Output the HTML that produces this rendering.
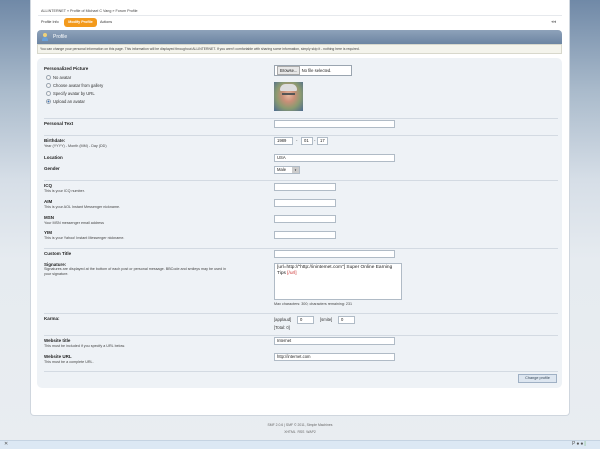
<!DOCTYPE html>
<html><head><meta charset="utf-8"><style>
*{margin:0;padding:0;box-sizing:border-box}
body{width:600px;height:449px;overflow:hidden;position:relative;font-family:"Liberation Sans",sans-serif;color:#333;
background:linear-gradient(to bottom,#7089a7 0px,#a9bacb 90px,#d6dee7 180px,#e6ebf0 260px,#e9edf1 449px)}
.a{position:absolute;white-space:nowrap}
.wrap{position:absolute;left:30px;top:0;width:540px;height:416px;background:#fff;border:1px solid #cfd6de;border-top:none;border-radius:0 0 4px 4px}
.t{font-size:4.2px;color:#333}
.b{font-size:4.5px;font-weight:bold;color:#222}
.s{font-size:3.7px;color:#444}
.in{position:absolute;height:8px;background:#fff;border:1px solid #b0bbc6;font-size:4.2px;line-height:6px;padding-left:2px;color:#222}
.hr{position:absolute;left:44px;width:514px;height:1px;background:#d3dae2}
.r{position:absolute;width:5px;height:5px;border-radius:50%;border:1px solid #9aa5b0;background:#f4f4f4}
</style></head><body>
<div class="wrap"></div>
<div class="a t" style="left:41px;top:9px;font-size:3.7px;color:#444">ALLINTERNET » Profile of Michael C Vang » Forum Profile</div>
<div class="a" style="left:38px;top:15px;width:524px;height:1px;background:#e6e9ed"></div>
<div class="a t" style="left:41px;top:20px;font-size:3.7px">Profile Info</div>
<div class="a" style="left:64px;top:18px;width:33px;height:9px;background:#f39a1c;border-radius:3px;color:#fff;font-size:3.7px;font-weight:bold;text-align:center;line-height:9px">Modify Profile</div>
<div class="a t" style="left:100px;top:20px;font-size:3.7px">Actions</div>
<div class="a" style="left:551px;top:19px;font-size:5px;color:#888">◂◂</div>
<div class="a" style="left:37px;top:30px;width:525px;height:14px;border-radius:4px 4px 0 0;background:linear-gradient(#8ea2ba,#6c85a2)"></div>
<div class="a" style="left:42px;top:33px;width:6px;height:8px"><div style="position:absolute;left:1px;top:0;width:4px;height:4px;border-radius:50%;background:#f0d27a"></div><div style="position:absolute;left:0;top:4px;width:6px;height:4px;border-radius:3px 3px 0 0;background:#6aa0d8"></div></div>
<div class="a" style="left:53px;top:34px;font-size:5px;color:#fff">Profile</div>
<div class="a" style="left:37px;top:44px;width:525px;height:10px;background:#f4f4ec;border:1px solid #d8d8cc"></div>
<div class="a s" style="left:40px;top:47px;font-size:3.4px">You can change your personal information on this page. This information will be displayed throughout ALLINTERNET. If you aren't comfortable with sharing some information, simply skip it - nothing here is required.</div>
<div class="a" style="left:37px;top:58px;width:525px;height:330px;background:#eef2f6;border-radius:5px"></div>

<div class="a b" style="left:44px;top:66px">Personalized Picture</div>
<div class="r" style="left:46px;top:75px"></div><div class="a t" style="left:53px;top:75px">No avatar</div>
<div class="r" style="left:46px;top:83px"></div><div class="a t" style="left:53px;top:83px">Choose avatar from gallery</div>
<div class="r" style="left:46px;top:91px"></div><div class="a t" style="left:53px;top:91px">Specify avatar by URL</div>
<div class="r" style="left:46px;top:99px;background:radial-gradient(#3a6fb0 35%,#f4f4f4 45%)"></div><div class="a t" style="left:53px;top:99px">Upload an avatar</div>
<div class="in" style="left:274px;top:65px;width:78px;height:11px;line-height:9px;border-color:#9aa5b0"><span style="display:inline-block;border:1px solid #aaa;background:#e8e8e8;padding:0 2px;line-height:7px">Browse...</span> No file selected.</div>
<div class="a" style="left:274px;top:82px;width:29px;height:29px;background:radial-gradient(ellipse at 50% 45%,#e8b9a0 0,#c98f78 30%,#8a9a70 60%,#4c6a90 100%)"><div style="position:absolute;left:6px;top:2px;width:17px;height:7px;border-radius:8px 8px 2px 2px;background:#ddd"></div><div style="position:absolute;left:8px;top:11px;width:13px;height:2px;background:#555"></div></div>

<div class="hr" style="top:118px"></div>
<div class="a b" style="left:44px;top:121px">Personal Text</div>
<div class="in" style="left:274px;top:120px;width:121px"></div>
<div class="hr" style="top:135px"></div>
<div class="a b" style="left:44px;top:138px">Birthdate:</div>
<div class="a s" style="left:44px;top:144px">Year (YYYY) - Month (MM) - Day (DD)</div>
<div class="in" style="left:274px;top:137px;width:19px">1989</div><div class="a t" style="left:296px;top:138px">-</div>
<div class="in" style="left:301px;top:137px;width:12px">01</div><div class="a t" style="left:314px;top:138px">-</div>
<div class="in" style="left:317px;top:137px;width:11px">17</div>
<div class="a b" style="left:44px;top:155px">Location</div>
<div class="in" style="left:274px;top:154px;width:121px">USA</div>
<div class="a b" style="left:44px;top:166px">Gender</div>
<div class="in" style="left:274px;top:166px;width:26px">Male<span style="position:absolute;right:0;top:0;width:7px;height:6px;background:#ccc;font-size:3px;text-align:center">▾</span></div>
<div class="hr" style="top:180px"></div>
<div class="a b" style="left:44px;top:183px">ICQ</div><div class="a s" style="left:44px;top:189px">This is your ICQ number.</div>
<div class="in" style="left:274px;top:183px;width:62px"></div>
<div class="a b" style="left:44px;top:199px">AIM</div><div class="a s" style="left:44px;top:205px">This is your AOL Instant Messenger nickname.</div>
<div class="in" style="left:274px;top:199px;width:62px"></div>
<div class="a b" style="left:44px;top:215px">MSN</div><div class="a s" style="left:44px;top:221px">Your MSN messenger email address</div>
<div class="in" style="left:274px;top:215px;width:62px"></div>
<div class="a b" style="left:44px;top:230px">YIM</div><div class="a s" style="left:44px;top:236px">This is your Yahoo! Instant Messenger nickname.</div>
<div class="in" style="left:274px;top:231px;width:62px"></div>
<div class="hr" style="top:248px"></div>
<div class="a b" style="left:44px;top:251px">Custom Title</div>
<div class="in" style="left:274px;top:250px;width:121px"></div>
<div class="a b" style="left:44px;top:262px">Signature:</div>
<div class="a s" style="left:44px;top:267px;white-space:normal;width:190px;line-height:5px">Signatures are displayed at the bottom of each post or personal message. BBCode and smileys may be used in your signature.</div>
<div class="in" style="left:274px;top:263px;width:128px;height:37px;white-space:normal;font-size:4.8px;line-height:6px;padding-top:1px">[url=http://"http://inintemet.com"] Super Online Earning Tips <span style="color:#c33">[/url]</span></div>
<div class="a s" style="left:274px;top:302px">Max characters: 300; characters remaining: 231</div>
<div class="hr" style="top:313px"></div>
<div class="a b" style="left:44px;top:316px">Karma:</div>
<div class="a t" style="left:274px;top:317px">[applaud]</div><div class="in" style="left:297px;top:316px;width:17px">0</div>
<div class="a t" style="left:320px;top:317px">[smite]</div><div class="in" style="left:338px;top:316px;width:17px">0</div>
<div class="a t" style="left:274px;top:325px">[Total: 0]</div>
<div class="hr" style="top:335px"></div>
<div class="a b" style="left:44px;top:338px">Website title</div><div class="a s" style="left:44px;top:344px">This must be included if you specify a URL below.</div>
<div class="in" style="left:274px;top:337px;width:121px">Internet</div>
<div class="a b" style="left:44px;top:354px">Website URL</div><div class="a s" style="left:44px;top:360px">This must be a complete URL.</div>
<div class="in" style="left:274px;top:353px;width:121px">http://internet.com</div>
<div class="hr" style="top:371px"></div>
<div class="a" style="left:518px;top:374px;width:39px;height:9px;background:#dde6f0;border:1px solid #9fb0c4;font-size:3.8px;line-height:7px;text-align:center;color:#345">Change profile</div>

<div class="a s" style="left:0;width:600px;text-align:center;top:423px;color:#666;font-size:3.4px">SMF 2.0.6 | SMF © 2011, Simple Machines</div>
<div class="a s" style="left:0;width:600px;text-align:center;top:430px;color:#666;font-size:3.4px">XHTML &nbsp;RSS &nbsp;WAP2</div>
<div class="a" style="left:0;top:440px;width:600px;height:9px;background:#dce8f4;border-top:1px solid #c5d3e2"></div>
<div class="a" style="left:4px;top:441px;font-size:5px;color:#555">✕</div>
<div class="a" style="left:572px;top:441px;font-size:5px;color:#555;letter-spacing:1px">P●●<span style="color:#5a5">|</span></div>
</body></html>
